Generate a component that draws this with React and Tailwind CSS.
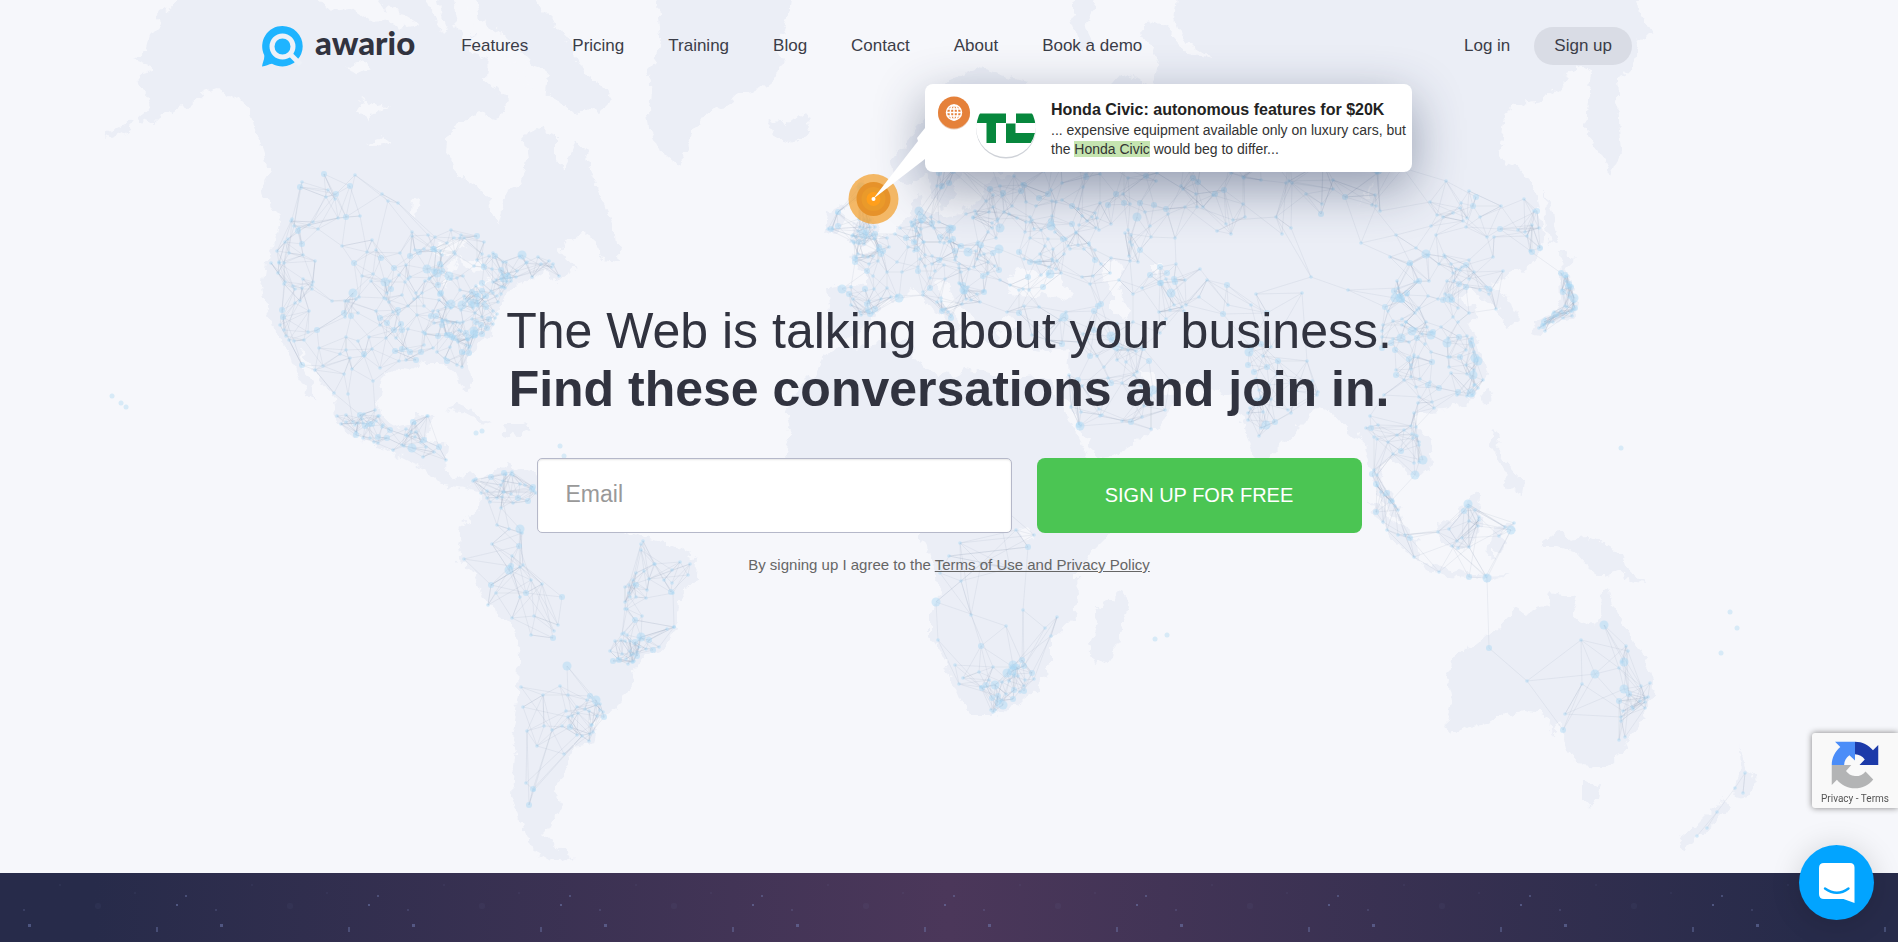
// Land outlines, in the coordinates of the 1898 x 873 map
const LAND = [
  // North America
  "192,-20 172,8 158,15 160,25 150,35 146,50 135,60 150,66 138,82 145,95 150,108 138,118 152,124 172,110 190,106 205,92 218,88 235,98 250,108 254,128 262,150 268,170 262,190 272,205 280,220 276,240 266,262 262,288 267,310 272,330 286,342 292,358 298,378 308,394 318,402 312,384 302,362 300,350 312,366 320,382 334,398 336,418 350,436 380,446 400,456 424,468 440,484 462,488 479,481 470,474 456,480 446,468 448,444 425,442 428,430 434,415 418,414 410,425 398,428 385,420 378,400 382,382 388,370 410,372 425,362 440,362 455,370 462,388 468,393 472,385 467,362 476,345 490,335 498,312 506,297 515,285 530,280 545,270 558,280 578,268 566,262 560,250 570,238 588,234 600,256 620,260 617,235 610,215 600,195 592,175 586,152 575,140 565,170 556,160 556,134 540,128 524,134 527,160 520,185 505,190 503,208 498,225 491,210 490,195 475,185 455,172 447,150 450,130 465,120 480,112 500,118 508,100 498,88 486,78 488,60 470,50 476,32 460,22 462,-20",
  "472,-20 480,20 500,32 520,48 532,66 548,72 546,94 560,102 575,116 586,106 600,112 612,100 602,84 584,72 572,50 562,30 542,10 526,-20",
  "118,134 104,140 108,133 126,124 134,118 130,128",
  // Greenland and Iceland
  "655,-20 658,15 660,40 655,60 648,75 650,95 648,110 650,130 660,150 672,160 678,164 686,150 695,130 705,115 722,108 738,95 760,90 775,78 783,60 775,50 782,35 790,15 795,-20",
  "770,118 785,125 796,116 808,118 812,128 805,138 790,142 775,137 768,128",
  // Caribbean
  "444,409 458,404 472,410 486,420 494,424 480,422 462,412",
  "502,424 520,424 530,430 518,436 504,432",
  // South America
  "463,488 479,481 490,474 508,464 522,472 546,474 580,482 600,505 612,528 630,534 664,543 682,550 697,559 696,578 685,590 679,600 678,618 672,640 660,650 644,655 636,664 632,684 622,700 612,710 606,719 588,718 597,731 594,743 573,746 568,764 561,778 553,791 562,804 556,816 550,826 542,834 556,846 573,857 555,863 540,854 533,850 524,831 518,812 513,794 516,754 511,738 515,716 518,694 519,658 516,628 500,616 488,606 480,590 473,574 459,559 458,544 462,528 470,516 479,508 480,492",
  // Britain and Ireland
  "862,178 852,190 855,205 863,212 855,225 849,243 865,245 880,238 878,228 870,210 862,200 870,190",
  "828,212 842,206 845,220 838,232 824,234",
  // Eurasia
  "893,160 895,180 908,187 925,175 930,190 940,212 952,205 955,185 965,170 960,155 974,130 990,115 1000,125 985,145 985,165 1000,172 1022,168 1005,178 990,180 985,195 975,205 960,212 940,216 924,212 920,192 913,198 912,215 900,225 885,238 870,250 850,256 858,266 868,275 868,286 850,285 828,287 830,305 826,330 840,338 855,337 872,320 885,300 900,298 910,288 925,300 935,310 950,325 955,335 962,325 945,305 935,285 945,283 955,300 975,320 985,340 995,345 1000,335 995,325 1010,316 1020,322 1010,335 1025,348 1045,352 1070,350 1068,370 1062,390 1074,415 1086,440 1096,458 1112,456 1132,445 1160,426 1178,396 1164,392 1150,386 1138,370 1150,374 1165,384 1185,386 1215,390 1232,395 1244,424 1254,458 1264,472 1276,448 1300,425 1318,407 1330,412 1348,432 1364,440 1372,476 1384,504 1402,522 1396,500 1380,480 1385,457 1405,466 1415,477 1432,465 1430,440 1414,422 1422,413 1445,410 1470,400 1488,375 1480,350 1468,325 1479,315 1474,308 1458,298 1470,288 1486,302 1500,312 1508,326 1521,320 1506,296 1494,288 1504,278 1525,268 1540,255 1545,232 1538,208 1532,182 1520,168 1498,160 1504,125 1512,105 1540,100 1560,88 1575,65 1592,72 1588,100 1586,130 1600,152 1612,175 1621,150 1618,120 1616,78 1626,74 1632,70 1640,40 1652,35 1640,15 1635,-20 1179,-20 1174,20 1190,44 1213,58 1188,54 1165,28 1150,20 1140,32 1158,60 1152,86 1138,80 1122,74 1108,90 1080,90 1040,86 1000,74 975,68 950,80 930,112 912,136",
  "1080,-20 1072,20 1078,40 1084,52 1092,44 1086,26 1094,10 1098,-20",
  // Africa
  "850,347 880,342 912,340 915,360 935,372 955,378 965,368 985,372 1010,379 1035,377 1050,382 1060,404 1072,426 1084,450 1096,474 1120,480 1144,476 1134,504 1108,536 1088,556 1077,574 1078,598 1073,618 1052,640 1052,662 1036,690 1015,706 994,714 970,714 962,704 950,676 940,652 930,636 930,618 940,590 932,560 919,536 912,506 890,508 860,512 830,505 800,480 785,455 790,430 786,410 800,388 818,370 824,352",
  "1123,591 1129,600 1120,634 1112,657 1094,664 1088,644 1096,626 1095,612",
  // Japan and Sakhalin
  "1545,190 1552,210 1558,240 1550,246 1546,220",
  "1560,252 1577,258 1566,268 1572,288 1577,302 1575,318 1556,322 1540,336 1530,334 1536,322 1552,314 1562,300",
  // Taiwan, Philippines and Indonesia
  "1489,386 1492,398 1486,406 1484,394",
  "1492,428 1500,436 1498,452 1512,468 1524,482 1522,494 1508,488 1502,466 1490,446",
  "1366,500 1384,512 1402,528 1418,541 1420,560 1408,554 1390,536 1378,516",
  "1475,492 1482,508 1481,524 1476,538 1469,550 1446,546 1438,534 1436,519 1452,522 1464,508",
  "1421,562 1446,568 1472,576 1509,575 1490,580 1450,576 1426,570",
  "1492,528 1516,522 1512,530 1498,534 1506,546 1502,554 1494,548 1494,560 1488,556",
  "1539,546 1557,531 1570,542 1587,539 1608,546 1624,554 1628,570 1646,584 1630,582 1618,572 1603,577 1590,568 1575,552 1558,546",
  // Australia, Tasmania and New Zealand
  "1445,726 1457,733 1470,726 1487,724 1504,714 1524,710 1545,714 1554,734 1563,721 1562,740 1569,753 1581,766 1602,768 1618,758 1626,744 1636,729 1652,698 1653,681 1645,658 1633,638 1621,621 1615,611 1608,588 1603,592 1602,611 1593,628 1580,620 1572,611 1576,596 1551,592 1548,604 1536,606 1526,616 1515,609 1500,626 1484,641 1466,648 1450,660 1448,678 1452,701",
  "1583,781 1592,786 1601,784 1598,798 1590,808 1583,800",
  "1739,748 1745,768 1757,778 1750,790 1741,801 1733,790 1740,778",
  "1724,798 1729,806 1716,822 1700,834 1684,850 1680,838 1700,822",
];

// Lakes, inland seas and arctic channels, cut back out of the land
const WATER = [
  "1010,296 1008,280 1018,268 1030,272 1040,276 1048,266 1060,278 1072,294 1066,300 1044,292 1030,298",
  "1102,264 1114,260 1124,266 1118,280 1124,300 1132,312 1124,320 1112,312 1112,294 1104,282",
  "1374,178 1368,196 1358,208 1364,200 1370,184",
  "1152,262 1160,262 1158,276 1152,274",
  "430,252 444,242 460,238 468,248 456,250 446,256",
  "448,262 458,258 452,276 448,288 444,280",
  "462,258 478,260 484,270 474,276 464,268",
  "468,288 484,280 490,276 484,286",
  "362,98 374,106 392,104 376,112 370,120 356,112",
  "366,144 384,138 394,142 376,146",
  "412,196 418,200 416,220 411,214",
  "1018,530 1030,526 1034,540 1022,542",
  "308,-10 326,10 352,8 372,22 392,20 398,30 420,24 400,12 382,6 370,-10",
  "452,-10 456,20 464,44 476,40 468,14 470,-10",
  "424,-10 434,16 444,34 448,30 440,8 436,-10",
  "496,40 512,58 520,82 534,92 526,66 508,42",
  "346,66 362,60 372,66 358,74",
];

// Centre, radii and number of nodes for each busy area
const CLUSTERS = [
  [340, 240, 75, 80, 50],
  [450, 300, 70, 70, 120],
  [510, 275, 50, 30, 30],
  [480, 330, 30, 40, 30],
  [290, 290, 30, 70, 26],
  [380, 360, 80, 80, 60],
  [395, 440, 70, 30, 45],
  [500, 490, 40, 20, 30],
  [660, 580, 44, 50, 34],
  [635, 650, 26, 20, 30],
  [585, 715, 20, 28, 24],
  [500, 590, 50, 70, 20],
  [540, 720, 40, 150, 22],
  [860, 225, 40, 40, 34],
  [910, 270, 80, 60, 130],
  [1000, 210, 110, 60, 90],
  [1090, 270, 120, 80, 100],
  [1180, 190, 180, 50, 50],
  [1280, 230, 200, 90, 60],
  [1440, 330, 60, 80, 120],
  [1270, 400, 50, 60, 34],
  [1120, 390, 60, 60, 40],
  [1480, 230, 70, 60, 36],
  [1560, 300, 30, 40, 40],
  [1400, 450, 40, 60, 34],
  [1440, 540, 80, 50, 34],
  [1010, 690, 30, 28, 36],
  [990, 610, 90, 110, 24],
  [1640, 710, 26, 80, 22],
  [1540, 660, 110, 80, 8],
  [1720, 800, 50, 60, 8],
];

const parse = (s) => s.split(" ").map((p) => p.split(",").map(Number));
const POLYGONS = LAND.map(parse);

function onLand(x, y) {
  return POLYGONS.some((poly) => {
    let inside = false;
    for (let i = 0, j = poly.length - 1; i < poly.length; j = i++) {
      const [xi, yi] = poly[i];
      const [xj, yj] = poly[j];
      if (yi > y !== yj > y && x < ((xj - xi) * (y - yi)) / (yj - yi) + xi) inside = !inside;
    }
    return inside;
  });
}

// Small seeded generator, so the network is the same on every render
function createRandom(seed) {
  let s = seed;
  return () => {
    s = (s * 16807) % 2147483647;
    return s / 2147483647;
  };
}

function buildNetwork() {
  const random = createRandom(4211);
  const nodes = [];
  CLUSTERS.forEach(([cx, cy, rx, ry, count]) => {
    let tries = 0;
    let placed = 0;
    while (placed < count && tries < count * 8) {
      tries++;
      const angle = random() * Math.PI * 2;
      const dist = Math.sqrt(random());
      const x = Math.round(cx + Math.cos(angle) * dist * rx);
      const y = Math.round(cy + Math.sin(angle) * dist * ry);
      if (!onLand(x, y)) continue;
      const size = random();
      nodes.push({ x, y, r: size > 0.95 ? 4.5 : size > 0.75 ? 3 : 1.8 });
      placed++;
    }
  });

  const links = [];
  nodes.forEach((a, i) => {
    nodes
      .map((b, j) => ({ j, d: Math.hypot(a.x - b.x, a.y - b.y) }))
      .filter(({ j, d }) => j !== i && d > 8 && d < 80)
      .sort((p, q) => p.d - q.d)
      .filter((_, k) => k === 1 || k === 5 || k === 9)
      .forEach(({ j }) => links.push(`M${a.x} ${a.y}L${nodes[j].x} ${nodes[j].y}`));
  });
  return { nodes, path: links.join("") };
}

const NETWORK = buildNetwork();

// Island nodes that stand on their own
const ISLANDS = [
  [112, 396], [121, 403], [126, 407], [476, 433], [482, 431], [560, 446], [564, 456], [1155, 639], [1167, 635],
  [1621, 448], [1730, 612], [1737, 628], [1721, 653],
];

const NAV = ["Features", "Pricing", "Training", "Blog", "Contact", "About", "Book a demo"];

function WorldMap() {
  return (
    <svg
      className="absolute inset-0 h-full w-full"
      viewBox="0 0 1898 873"
      preserveAspectRatio="xMidYMin slice"
      aria-hidden="true"
    >
      <defs>
        <filter id="coast" x="0" y="0" width="100%" height="100%">
          <feTurbulence type="fractalNoise" baseFrequency="0.09" numOctaves="3" seed="7" />
          <feDisplacementMap in="SourceGraphic" scale="13" xChannelSelector="R" yChannelSelector="G" />
        </filter>
      </defs>
      <g filter="url(#coast)">
        {LAND.map((points) => (
          <polygon key={points} points={points} fill="#ebeef6" />
        ))}
        {WATER.map((points) => (
          <polygon key={points} points={points} fill="#f6f7fb" />
        ))}
      </g>
      <path d={NETWORK.path} stroke="#8a98ae" strokeOpacity="0.13" fill="none" />
      {NETWORK.nodes.map((n, i) => (
        <circle key={i} cx={n.x} cy={n.y} r={n.r} fill="#a9d8f3" fillOpacity="0.45" />
      ))}
      {ISLANDS.map(([x, y]) => (
        <circle key={`${x}-${y}`} cx={x} cy={y} r="2.5" fill="#a9d8f3" fillOpacity="0.4" />
      ))}
    </svg>
  );
}

function Logo() {
  return (
    <a href="#" className="flex items-center gap-3 text-[#31333f]">
      <svg width="41" height="41" viewBox="0 0 41 41" aria-hidden="true">
        <path
          d="M20.5 0A20.2 20.2 0 1 1 20.5 40.4C17 40.4 13.500 39.500 10 37.800C6.500 38 4 40.500 0 40.500C.6 36 2.800 33 2.200 29A20.200 20.200 0 0 1 20.500 0Z"
          fill="#1fb4ff"
        />
        <circle cx="20.500" cy="20.500" r="10.500" fill="#1fb4ff" stroke="#eef1f8" strokeWidth="5" />
        <path d="M27 27L38.500 38.500" stroke="#eef1f8" strokeWidth="5" />
      </svg>
      <span className="pb-2 font-[Lato,sans-serif] text-[33px] leading-9 font-black">awario</span>
    </a>
  );
}

function Header() {
  return (
    <header className="relative mx-auto flex h-[92px] w-full max-w-[1374px] items-center text-[17px] text-[#3b3d48]">
      <Logo />
      <nav className="ml-[46px] flex gap-11">
        {NAV.map((item) => (
          <a key={item} href="#">
            {item}
          </a>
        ))}
      </nav>
      <div className="mr-1 ml-auto flex items-center gap-6">
        <a href="#">Log in</a>
        <a href="#" className="rounded-full bg-[#d9dce5] px-5 py-[6px]">
          Sign up
        </a>
      </div>
    </header>
  );
}

function SourceIcons() {
  return (
    <svg width="100" height="64" viewBox="0 0 100 64" className="shrink-0" aria-hidden="true">
      <defs>
        <clipPath id="avatar">
          <circle cx="68" cy="31" r="29.5" />
        </clipPath>
      </defs>
      <circle cx="68" cy="32.5" r="30" fill="#cfd2d8" />
      <circle cx="68" cy="31" r="30" fill="#fff" />
      <g clipPath="url(#avatar)" fill="#07873d">
        <path d="M36 17.500H68V27H58V47H48.500V27H36Z" />
        <path d="M68 27.500H77.500V37H100V47H68Z" />
        <path d="M78 17.500H100V27H78Z" />
      </g>
      <circle cx="16" cy="17.500" r="16" fill="#c96f33" fillOpacity="0.4" />
      <circle cx="16" cy="16.500" r="16" fill="#e5813a" />
      <g fill="none" stroke="#fff" strokeWidth="1.5">
        <circle cx="16" cy="16.500" r="7.500" />
        <ellipse cx="16" cy="16.500" rx="3.700" ry="7.500" />
        <path d="M16 9V24M9.500 13H22.500M9.500 20H22.500M8.500 16.500H23.500" />
      </g>
    </svg>
  );
}

// Mention card with its marker on the map
function MentionCard() {
  return (
    <>
      <article className="absolute top-[84px] left-1/2 -ml-6 flex w-[487px] rounded-lg bg-white py-3 pl-[13px] text-sm leading-[19px] text-[#333] shadow-[0_16px_50px_rgba(35,50,85,0.45)]">
        <SourceIcons />
        <div className="ml-[13px] pt-[3px]">
          <h2 className="text-base leading-[22px] font-bold whitespace-nowrap text-[#222]">
            Honda Civic: autonomous features for $20K
          </h2>
          <p>
            ... expensive equipment available only on luxury cars, but
            <br />
            the <mark className="bg-[#c5e4b0] text-[#333]">Honda Civic</mark> would beg to differ...
          </p>
        </div>
      </article>
      <svg
        className="absolute top-[124px] left-1/2 -ml-[101px]"
        width="78"
        height="102"
        viewBox="0 0 78 102"
        aria-hidden="true"
      >
        <circle cx="25.5" cy="75" r="25" fill="#f2a02c" fillOpacity="0.72" />
        <circle cx="25.5" cy="75" r="17" fill="#e6922a" />
        <circle cx="25.5" cy="75" r="12" fill="#ea9a2a" />
        <circle cx="25.5" cy="75" r="7" fill="#ff9f1c" />
        <path d="M25 75L70 17L69 14L77 4V35Z" fill="#fff" />
        <circle cx="25.5" cy="75" r="2" fill="#fff" />
      </svg>
    </>
  );
}

function Hero() {
  return (
    <section className="relative bg-[#f6f7fb]">
      <WorldMap />
      <Header />
      <MentionCard />
      <div className="relative mx-auto flex max-w-[900px] flex-col items-center pt-[210px] pb-[298px]">
        <h1 className="text-center text-[50px] leading-[58px] text-[#31333f]">
          The Web is talking about your business.
          <br />
          <strong>Find these conversations and join in.</strong>
        </h1>
        <form className="mt-[40px] flex gap-[25px]">
          <input
            type="email"
            aria-label="Email"
            placeholder="Email"
            className="h-[75px] w-[475px] rounded-[5px] border border-[#b5b8c9] bg-white px-7 pb-[2px] text-[23px] shadow-[inset_0_1px_2px_rgba(0,0,0,0.1)] placeholder:text-[#999]"
          />
          <button type="submit" className="h-[75px] w-[325px] rounded-lg bg-[#4bc553] pb-[2px] text-xl text-white">
            SIGN UP FOR FREE
          </button>
        </form>
        <p className="mt-[22px] text-[15px] leading-5 text-[#666]">
          By signing up I agree to the{" "}
          <a href="#" className="underline">
            Terms of Use and Privacy Policy
          </a>
        </p>
      </div>
    </section>
  );
}

function NightStrip() {
  return (
    <div className="min-h-[69px] flex-1 bg-linear-to-r from-[#272b4a] from-5% via-[#4b375a] to-[#272b4a] to-95%">
      <svg className="h-[69px] w-full" aria-hidden="true">
        <defs>
          <pattern id="stars" width="192" height="69" patternUnits="userSpaceOnUse">
            <g fill="#7480b5">
              <circle cx="24" cy="37" r="1" fillOpacity="0.3" />
              <rect x="28" y="51" width="3" height="3" fillOpacity="0.5" />
              <rect x="156" y="54" width="2" height="5" fillOpacity="0.4" />
              <rect x="176" y="31" width="2" height="2" fillOpacity="0.5" />
              <rect x="185" y="22" width="2" height="2" fillOpacity="0.4" />
              <circle cx="98" cy="33" r="3" fillOpacity="0.06" />
              <circle cx="60" cy="12" r="1" fillOpacity="0.1" />
              <circle cx="135" cy="20" r="1" fillOpacity="0.1" />
            </g>
          </pattern>
        </defs>
        <rect width="100%" height="69" fill="url(#stars)" />
      </svg>
    </div>
  );
}

function RecaptchaBadge() {
  return (
    <div className="fixed right-0 bottom-[134px] flex h-[75px] w-[86px] flex-col items-center rounded-l-[3px] bg-[#f9f9f9] pt-2 shadow-[0_0_6px_#808080]">
      <svg width="48" height="48" viewBox="0 0 64 64" aria-hidden="true">
        <path d="M32 1C41.600 1 50.200 5.300 56 12.400L63 5.400V32H38L45 24.500C42 20 37.500 17.800 32 17.500Z" fill="#1c3aa9" />
        <path d="M1 32C1 22.400 5.300 13.800 12.400 8L5.400 1H32V26L24.500 19C20 22 17.800 26.500 17.500 32Z" fill="#4b8df8" />
        <path
          d="M1 32V58.600L7.900 51.600C13.600 58.700 22.300 63 32 63C41.900 63 50.600 58.400 56.300 51.200L46 40.500C43 44.500 38 47 32 46.800C26.600 46.500 22.500 43.500 20 40L27 32Z"
          fill="#b3b4b5"
        />
      </svg>
      <p className="mt-1 font-[Roboto,sans-serif] text-[10px] leading-3 text-[#555]">
        <a href="#">Privacy</a> - <a href="#">Terms</a>
      </p>
    </div>
  );
}

function ChatButton() {
  return (
    <button
      type="button"
      aria-label="Open chat"
      className="fixed right-6 bottom-[22px] flex size-[75px] items-center justify-center rounded-full bg-[#02a4ff] shadow-[0_2px_30px_rgba(0,0,0,0.15)]"
    >
      <svg width="36" height="40" viewBox="0 0 36 40" aria-hidden="true">
        <path d="M5 0H31Q35.500 0 35.500 4.500V40L24.500 36H5Q0 36 0 31V5Q0 0 5 0Z" fill="#fff" />
        <path d="M6 25.500Q18 34 29.500 25.500" stroke="#02a4ff" strokeWidth="2.400" strokeLinecap="round" fill="none" />
      </svg>
    </button>
  );
}

export default function App() {
  return (
    <div className="flex min-h-screen flex-col font-['Liberation_Sans',Arial,sans-serif]">
      <Hero />
      <NightStrip />
      <RecaptchaBadge />
      <ChatButton />
    </div>
  );
}
